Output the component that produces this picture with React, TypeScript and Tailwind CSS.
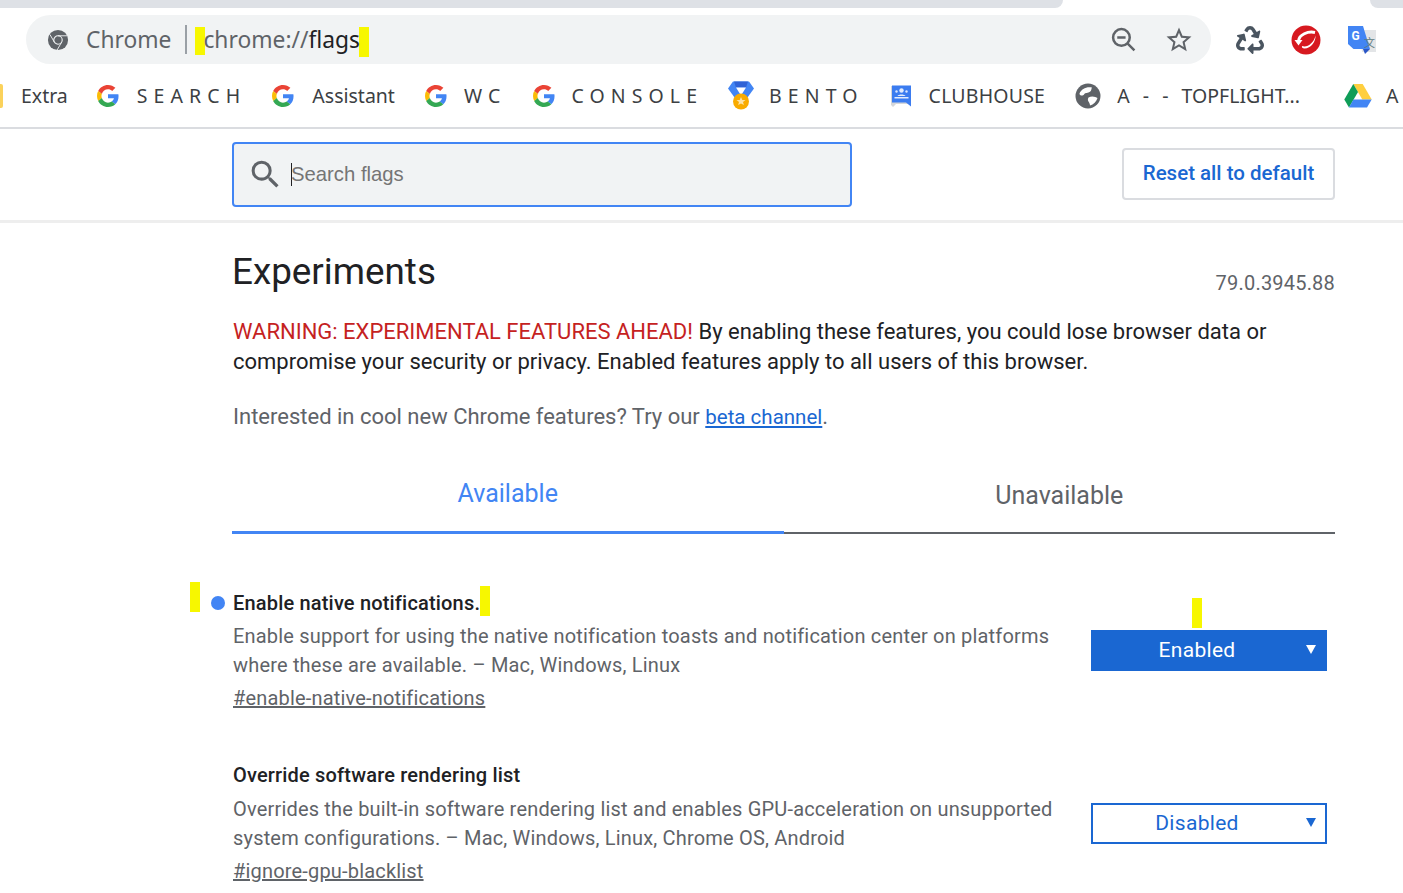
import React from 'react';
import { FaRecycle } from 'react-icons/fa';

const Mark = ({ className = '' }: { className?: string }) => (
  <span className={`absolute w-[10px] bg-[#f7f700] ${className}`} />
);

const GoogleG = () => (
  <svg viewBox="0 0 48 48" className="w-[22px] h-[22px] shrink-0">
    <path fill="#EA4335" d="M24 9.5c3.5 0 6.7 1.2 9.2 3.6l6.9-6.9C35.9 2.4 30.5 0 24 0 14.6 0 6.5 5.4 2.6 13.2l8 6.2C12.4 13.7 17.7 9.5 24 9.5z" />
    <path fill="#4285F4" d="M47 24.5c0-1.6-.1-3.1-.4-4.5H24v9h12.9c-.6 3-2.2 5.4-4.8 7.1l7.7 6C44.3 38.3 47 32 47 24.5z" />
    <path fill="#FBBC05" d="M10.5 28.6c-.5-1.4-.8-3-.8-4.6s.3-3.2.8-4.6l-8-6.2C.9 16.5 0 20.1 0 24s.9 7.5 2.6 10.8l7.9-6.2z" />
    <path fill="#34A853" d="M24 48c6.5 0 11.9-2.1 15.9-5.8l-7.7-6c-2.2 1.4-4.9 2.3-8.2 2.3-6.3 0-11.6-4.2-13.5-9.9l-8 6.2C6.5 42.6 14.6 48 24 48z" />
  </svg>
);

const ChromeMark = () => (
  <svg viewBox="0 0 24 24" className="w-[22px] h-[22px] shrink-0">
    <circle cx="12" cy="12" r="11" fill="#5f6368" />
    <circle cx="12" cy="12" r="4.6" fill="#5f6368" stroke="#f1f3f4" strokeWidth="1.2" />
    <path d="M12 7.4h10M8 14.3 3.2 6M16 14.3 11 23" stroke="#f1f3f4" strokeWidth="1" fill="none" />
  </svg>
);

const Bento = () => (
  <svg viewBox="0 0 26 28" className="w-[26px] h-[29px] shrink-0">
    <path d="M5 0h16l5 7-8 11H8L0 7z" fill="#4285f4" />
    <path d="M6 0h14l-2 6H8z" fill="#2f62d6" />
    <path d="M8 6h10l-5 8z" fill="#fff" />
    <circle cx="13" cy="20" r="8" fill="#f9ab00" />
    <path d="m13 15.5 1.3 3h3.2l-2.5 2 .9 3.1-2.9-1.7-2.9 1.7.9-3.1-2.5-2h3.2z" fill="#fde3a7" />
  </svg>
);

const Clubhouse = () => (
  <svg viewBox="0 0 22 24" className="w-[22px] h-[24px] shrink-0">
    <path d="M1 2h20v18H6l-3 3-2-2z" fill="#d5d7da" />
    <path d="M2 1.5h19v21l-5-4H2z" fill="#3b7cf0" />
    <circle cx="11.5" cy="6.5" r="2.2" fill="#e3ecfd" />
    <circle cx="6.5" cy="7.5" r="1.2" fill="#dbe7fd" />
    <circle cx="16.5" cy="7.5" r="1.2" fill="#dbe7fd" />
    <path d="M7.5 12c1-2 7-2 8 0zM4.5 13h14v1.4h-14z" fill="#e3ecfd" />
  </svg>
);

const Globe = () => (
  <svg viewBox="0 0 26 26" className="w-[26px] h-[26px] shrink-0">
    <circle cx="13" cy="13" r="12.5" fill="#5f6368" />
    <path d="M4.5 10.5C6.5 6 11 3.5 17 4.5c-1 1.5 0 3-2.5 4.500-3 1.500-4.500.5-5.500 2.500-1 1.500-4.500 1.500-4.500-1zM13.500 14.500c3-2 7-1 9 .5-1 3.500-4 6.500-7.500 7.500 0-3.500-3.500-4.500-1.500-8z" fill="#fff" />
  </svg>
);

const Drive = () => (
  <svg viewBox="0 0 28 25" className="w-[28px] h-[25px] shrink-0">
    <path d="M9.3 1h9.4l9 15.5h-9.4z" fill="#ffcf3f" />
    <path d="M9.3 1 .3 16.5l4.7 8 9-15.5z" fill="#0f9d58" />
    <path d="M9.4 16.5h18.3l-4.7 8H5z" fill="#4285f4" />
  </svg>
);

const TrendMicro = () => (
  <svg viewBox="0 0 30 30" className="w-[30px] h-[30px]">
    <circle cx="15" cy="15" r="14.5" fill="#d71920" />
    <path d="M24 7.5C17 6 8 9.5 7.5 16" stroke="#fff" strokeWidth="3" fill="none" />
    <path d="m3.5 15 4 5.5 4-5.5z" fill="#fff" />
    <path d="M11 21c5 2 12-3 13.5-10.5.4 6-4.5 13-11 13-2 0-3-1-2.5-2.5z" fill="#fff" />
  </svg>
);

const Translate = () => (
  <svg viewBox="0 0 30 30" className="w-[30px] h-[30px]">
    <path d="M12 5h17v22H15z" fill="#e3e5e7" />
    <path d="M1 1h15l7 23H6.5L1 19z" fill="#4285f4" />
    <path d="M16 24h7l-5 5z" fill="#2a56c6" />
    <text x="4.5" y="15" fontSize="12" fontWeight="700" fill="#fff" fontFamily="Roboto, sans-serif">G</text>
    <text x="17" y="22" fontSize="11" fill="#5f7a80" fontFamily="'Noto Sans CJK SC', sans-serif">文</text>
  </svg>
);

const Bookmark = ({ icon, label, wide, className = '' }: { icon: React.ReactNode; label: string; wide?: boolean; className?: string }) => (
  <div className={`flex items-center shrink-0 ${className}`}>
    {icon}
    {label && <span className={`text-[#3c4043] text-[19.5px] whitespace-pre ${wide ? 'tracking-[6.1px]' : ''}`}>{label}</span>}
  </div>
);

const FlagRow = ({ title, dot, desc, platforms, link, value, enabled }: {
  title: string; dot?: boolean; desc: string; platforms: string; link: string; value: string; enabled?: boolean;
}) => (
  <div className="flex h-[172px] justify-between pr-2 tracking-[0.18px]">
    <div className="w-[840px]">
      <h2 className="relative text-[20px] leading-[29px] font-medium text-[#202124] whitespace-nowrap">
        {dot && <span className="absolute left-[-22px] top-[7px] w-[14px] h-[14px] rounded-full bg-[#4285f4]" />}
        {title}
      </h2>
      <p className={`text-[20px] leading-[29px] text-[#5f6368] whitespace-nowrap ${enabled ? 'mt-[4px]' : 'mt-[5px]'}`}>
        {desc}
        <br />
        {platforms}
      </p>
      <a className="block mt-[4px] text-[20px] leading-[29px] text-[#5f6368] underline">{link}</a>
    </div>
    <div
      className={`relative w-[236px] h-[41px] flex items-center justify-center pr-[24px] text-[21px] tracking-[0.3px] border-[2px] border-[#1a67d2] ${
        enabled ? 'mt-[41px] bg-[#1a67d2] text-white' : 'mt-[42px] bg-white text-[#1a67d2]'
      }`}
    >
      {value}
      <svg viewBox="0 0 10 9" className={`absolute right-[9px] top-[13px] w-[10px] h-[9px] ${enabled ? 'fill-white' : 'fill-[#1a67d2]'}`}>
        <path d="M0 0h10L5 9z" />
      </svg>
    </div>
  </div>
);

export default function App() {
  return (
    <div className="relative w-[1403px] h-[893px] overflow-hidden bg-white font-['Roboto',sans-serif]">
      {/* ── Tab strip ─────────────────────────────────────────────── */}
      <div className="flex h-[8px]">
        <div className="w-[1063px] bg-[#dee1e6] rounded-br-[10px]" />
        <div className="flex-1" />
        <div className="w-[33px] bg-[#dee1e6] rounded-bl-[10px]" />
      </div>

      {/* ── Omnibox ───────────────────────────────────────────────── */}
      <div className="flex items-center h-[49px] mt-[7px] pl-[26px]">
        <div className="relative flex items-center w-[1185px] h-[49px] rounded-full bg-[#f1f3f4] pl-[21px]">
          <Mark className="left-[169px] top-[12px] h-[28px]" />
          <Mark className="left-[333px] top-[12px] h-[30px]" />
          <ChromeMark />
          <span className="ml-[17px] pt-[2px] text-[22.8px] text-[#5f6368] font-['Noto_Sans',sans-serif]">Chrome</span>
          <span className="ml-[14px] w-[2px] h-[29px] bg-[#9aa0a6]" />
          <span className="relative ml-[16px] pt-[2px] text-[22.8px] font-['Noto_Sans',sans-serif] text-[#5f6368] whitespace-pre">
            chrome://<span className="text-[#202124]">flags</span>
          </span>
          <div className="ml-auto flex items-center gap-[28px] pr-[17px]">
            <svg viewBox="0 0 24 24" className="w-[25px] h-[25px] fill-none stroke-[#5f6368]" strokeWidth="2.4">
              <circle cx="10" cy="10" r="8" />
              <path d="m16 16 6.5 6.5M6 10h8" />
            </svg>
            <svg viewBox="0 0 24 24" className="w-[30px] h-[30px] fill-[#5f6368]">
              <path d="M22 9.24l-7.19-.62L12 2 9.19 8.63 2 9.24l5.46 4.73L5.82 21 12 17.27 18.18 21l-1.63-7.03L22 9.24zM12 15.4l-3.76 2.27 1-4.28-3.32-2.88 4.38-.38L12 6.1l1.71 4.04 4.38.38-3.32 2.88 1 4.28L12 15.4z" />
            </svg>
          </div>
        </div>
        <div className="ml-[25px] flex items-center">
          <FaRecycle className="w-[28px] h-[28px] text-[#4a5560]" />
          <span className="ml-[27px]"><TrendMicro /></span>
          <span className="ml-[26px]"><Translate /></span>
        </div>
      </div>

      {/* ── Bookmarks ─────────────────────────────────────────────── */}
      <div className="relative flex items-center h-[65px] border-b-[2px] border-[#dadce0] pl-[21px] font-['Noto_Sans',sans-serif] whitespace-nowrap overflow-hidden">
        <span className="absolute left-[-6px] top-[20px] w-[9px] h-[24px] rounded-[2px] bg-[#fbd25b]" />
        <Bookmark icon={null} label="Extra" />
        <Bookmark icon={<GoogleG />} label="" className="ml-[29px]" />
        <Bookmark icon={null} label="SEARCH" wide className="ml-[18px]" />
        <Bookmark icon={<GoogleG />} label="" className="ml-[26px]" />
        <Bookmark icon={null} label="Assistant" className="ml-[18px]" />
        <Bookmark icon={<GoogleG />} label="" className="ml-[30px]" />
        <Bookmark icon={null} label="WC" wide className="ml-[17px]" />
        <Bookmark icon={<GoogleG />} label="" className="ml-[27px]" />
        <Bookmark icon={null} label="CONSOLE" wide className="ml-[16px]" />
        <Bookmark icon={<Bento />} label="" className="ml-[25px]" />
        <Bookmark icon={null} label="BENTO" wide className="ml-[15px]" />
        <Bookmark icon={<Clubhouse />} label="" className="ml-[26px]" />
        <Bookmark icon={null} label="CLUBHOUSE" className="ml-[17px] tracking-[0.2px]" />
        <Bookmark icon={<Globe />} label="" className="ml-[30px]" />
        <Bookmark icon={null} label="A  -  -  TOPFLIGHT..." className="ml-[16px] [word-spacing:1.5px]" />
        <Bookmark icon={<Drive />} label="" className="ml-[44px]" />
        <Bookmark icon={null} label="A" className="ml-[14px]" />
      </div>

      {/* ── Search header ─────────────────────────────────────────── */}
      <div className="flex items-center justify-between h-[94px] pl-[232px] pr-[68px] border-b-[3px] border-[#eeeeee]">
        <div className="flex items-center w-[620px] h-[65px] rounded-[4px] border-[2px] border-[#4285f4] bg-[#f1f3f4] pl-[13px]">
          <svg viewBox="0 0 24 24" className="w-[37px] h-[37px] fill-[#5f6368] shrink-0">
            <path d="M15.5 14h-.79l-.28-.27A6.471 6.471 0 0 0 16 9.5 6.5 6.5 0 1 0 9.5 16c1.61 0 3.09-.59 4.23-1.57l.27.28v.79l5 4.99L20.49 19l-4.99-5zm-6 0C7.01 14 5 11.99 5 9.5S7.01 5 9.5 5 14 7.01 14 9.5 11.99 14 9.5 14z" />
          </svg>
          <span className="ml-[7px] w-[1px] h-[23px] bg-[#202124]" />
          <span className="-ml-[1px] text-[20.3px] text-[#757575] font-['Liberation_Sans',sans-serif]">Search flags</span>
        </div>
        <button className="mb-[2px] w-[213px] h-[52px] rounded-[4px] border-[2px] border-[#dadce0] bg-white text-[20.5px] font-medium text-[#1a67d2]">
          Reset all to default
        </button>
      </div>

      {/* ── Content ───────────────────────────────────────────────── */}
      <div className="pl-[233px] pr-[68px]">
        <div className="flex items-start justify-between pt-[24px]">
          <h1 className="ml-[-1px] text-[36.8px] leading-[50px] text-[#202124]">Experiments</h1>
          <span className="mt-[21px] text-[20px] leading-[30px] tracking-[0.2px] text-[#5f6368]">79.0.3945.88</span>
        </div>
        <p className="mt-[19px] text-[22px] leading-[30px] text-[#202124]">
          <span className="text-[#c5221f]">WARNING: EXPERIMENTAL FEATURES AHEAD!</span> By enabling these features, you could lose browser data or compromise your security or privacy. Enabled features apply to all users of this browser.
        </p>
        <p className="mt-[25px] text-[22px] leading-[30px] text-[#5f6368]">
          Interested in cool new Chrome features? Try our <a className="text-[20.5px] text-[#1a67d2] underline">beta channel</a>.
        </p>

        {/* Tabs */}
        <div className="flex mt-[31px] ml-[-1px] h-[71px]">
          <div className="flex-1 flex items-center justify-center pb-[6px] border-b-[3px] border-[#4285f4] text-[25px] text-[#4285f4]">Available</div>
          <div className="flex-1 flex items-center justify-center pb-[3px] border-b-[2px] border-[#5f6368] text-[25px] text-[#5f6368]">Unavailable</div>
        </div>

        <div className="relative mt-[55px]">
          <Mark className="left-[-43px] top-[-7px] h-[30px]" />
          <Mark className="left-[247px] top-[-3px] h-[30px]" />
          <Mark className="left-[959px] top-[9px] h-[30px]" />
          <FlagRow
            dot
            title="Enable native notifications."
            desc="Enable support for using the native notification toasts and notification center on platforms"
            platforms="where these are available. – Mac, Windows, Linux"
            link="#enable-native-notifications"
            value="Enabled"
            enabled
          />
          <FlagRow
            title="Override software rendering list"
            desc="Overrides the built-in software rendering list and enables GPU-acceleration on unsupported"
            platforms="system configurations. – Mac, Windows, Linux, Chrome OS, Android"
            link="#ignore-gpu-blacklist"
            value="Disabled"
          />
        </div>
      </div>
    </div>
  );
}
